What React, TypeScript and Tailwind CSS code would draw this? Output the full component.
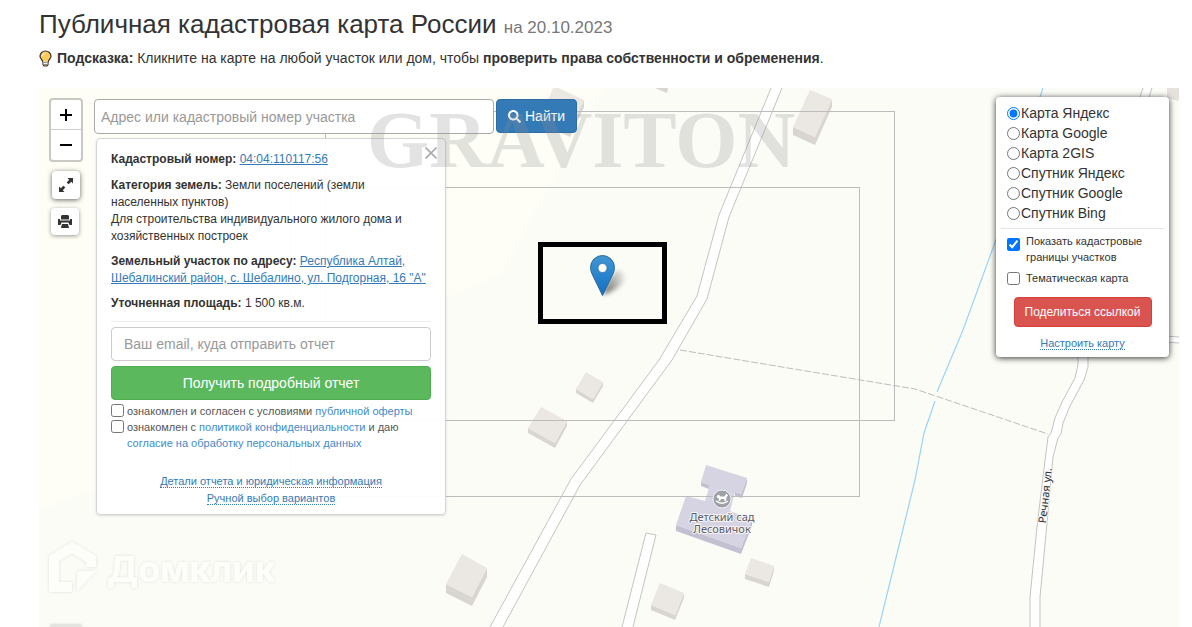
import { FaSearch } from "react-icons/fa";

const layers = [
  "Карта Яндекс",
  "Карта Google",
  "Карта 2GIS",
  "Спутник Яндекс",
  "Спутник Google",
  "Спутник Bing",
];

type Point = [number, number];

// roof corners: top, right, bottom, left
const buildings: { roof: Point[]; depth: number }[] = [
  { roof: [[586, 372], [603, 382], [593, 399], [576, 389]], depth: 4 },
  { roof: [[541, 407], [567, 421], [555, 443], [528, 428]], depth: 5 },
  { roof: [[751, 558], [774, 566], [769, 582], [745, 574]], depth: 5 },
  { roof: [[660, 583], [684, 593], [675, 615], [651, 605]], depth: 5 },
  { roof: [[462, 554], [487, 568], [472, 597], [446, 584]], depth: 9 },
  { roof: [[810, 90], [832, 99], [815, 137], [793, 127]], depth: 8 },
  { roof: [[554, 86], [584, 100], [570, 130], [541, 116]], depth: 7 },
];

const Building = ({ roof, depth }: { roof: Point[]; depth: number }) => {
  const [, right, bottom, left] = roof;
  const down = ([x, y]: Point): Point => [x, y + depth];
  const walls = [left, bottom, right, down(right), down(bottom), down(left)];

  return (
    <g>
      <polygon points={walls.join(" ")} fill="#d9d5d0" />
      <polygon points={roof.join(" ")} fill="#ebe7e2" />
    </g>
  );
};

const MapCanvas = () => {
  return (
    <svg
      className="absolute inset-0 size-full"
      viewBox="39 88 1140 539"
      preserveAspectRatio="xMidYMin slice"
      aria-hidden="true"
    >
      <defs>
        <linearGradient id="pin" x1="0" y1="0" x2="0" y2="1">
          <stop offset="0" stopColor="#4196d3" />
          <stop offset="1" stopColor="#126fc6" />
        </linearGradient>
        <linearGradient id="pin-shadow" x1="0" y1="0.7" x2="1" y2="0.3">
          <stop offset="0" stopColor="#000" stopOpacity="0.55" />
          <stop offset="1" stopColor="#000" stopOpacity="0.05" />
        </linearGradient>
        <filter id="soft" x="-50%" y="-50%" width="200%" height="200%">
          <feGaussianBlur stdDeviation="2" />
        </filter>
        <filter id="glow" x="-20%" y="-20%" width="140%" height="140%">
          <feDropShadow dx="0" dy="0" stdDeviation="1.500" floodColor="#000" floodOpacity="0.12" />
        </filter>
      </defs>

      <rect x="39" y="88" width="1140" height="539" fill="#fbfcf6" />
      <polygon points="39,88 605,88 500,275 446,298 96,490 39,510" fill="#fefef6" />

      {/* river */}
      <path
        d="M1043 88L1040 97L997 237L963 330L937 392M935 401L924 433L915 480L904 525L879 627"
        fill="none"
        stroke="#9bd4f3"
        strokeWidth="1.2"
      />

      {/* roads */}
      <g fill="#fff">
        <path d="M771 88L719 215L697 296L659 360L571 479L490 627H503L580 485L672 360L707 299L729 217L782 88Z" />
        <path d="M646 533L656 535L633 627H622Z" />
        <path d="M1078 350V365L1075 378L1062 402L1055 418L1051 433L1048 437L1043 477L1037 527L1030 597V627H1040V597L1047 523L1053 457L1058 438L1061 434L1063 423L1070 406L1084 380L1088 367V350Z" />
        <path d="M1143 88L1140 97H1149L1152 88ZM1165 336L1179 337V343L1165 342Z" />
      </g>
      <g fill="none" stroke="#c4c4c2" strokeWidth="1">
        <path d="M771 88L719 215L697 296L659 360L571 479L490 627M503 627L580 485L672 360L707 299L729 217L782 88" />
        <path d="M622 627L646 533L656 535L633 627" />
        <path d="M1078 350V365L1075 378L1062 402L1055 418L1051 433L1048 437L1043 477L1037 527L1030 597V627M1040 627V597L1047 523L1053 457L1058 438L1061 434L1063 423L1070 406L1084 380L1088 367V350" />
        <path d="M1143 88L1140 97M1149 97L1152 88M1165 336L1179 337M1165 342L1179 343" />
      </g>
      <path
        d="M680 350L782 367L915 389L1048 434"
        fill="none"
        stroke="#bdbdbd"
        strokeWidth="1"
        strokeDasharray="7 2"
      />

      {buildings.map((building, index) => (
        <Building key={index} {...building} />
      ))}
      <polygon points="655,88 668,88 667,93" fill="#d9d5d0" />
      <polygon points="1167,88 1179,88 1179,101 1167,98" fill="#e5e1dd" />

      {/* kindergarten */}
      <g fill="#c3c0d1">
        <polygon points="676,525 741,548 752,519 752,526 741,554 676,531" />
        <polygon points="701,482 710,485 709,489 701,486" />
        <polygon points="747,478 747,483 742,498 735,496 735,492 741,494" />
      </g>
      <polygon
        points="706,465 747,478 741,494 735,492 730,511 752,519 741,548 676,525 686,496 705,501 710,485 701,482"
        fill="#d6d3e2"
      />

      {/* parcel borders */}
      <g fill="none" stroke="#bcbcbc">
        <rect x="325.5" y="111.5" width="569" height="309" />
        <rect x="290.5" y="187.5" width="569" height="309" />
      </g>

      <circle cx="722" cy="499" r="9" fill="#9ea2a6" stroke="#f2f1f5" strokeWidth="1" />
      <path
        d="M716.500 496.500L718.500 494.500L720.500 496.500H724.500L726.500 493.500L728 495.500L726.500 497L726 501H724.500L724 499H721L720 501H718.500L719 498.500L717.500 498Z"
        fill="#fff"
      />
      <path d="M716 501q6 4.500 12 0" fill="none" stroke="#fff" strokeWidth="1.400" />

      <g
        className="font-['Noto_Sans',sans-serif]"
        fontSize="11"
        stroke="#f7f6fa"
        strokeWidth="2"
        strokeLinejoin="round"
        paintOrder="stroke"
        textAnchor="middle"
      >
        <text x="722" y="521" fill="#5b5b63">
          Детский сад
        </text>
        <text x="722" y="533" fill="#5b5b63">
          Лесовичок
        </text>
        <text transform="translate(1049 496) rotate(-84)" fill="#333">
          Речная ул.
        </text>
      </g>

      {/* marker */}
      <path d="M603 295Q608 276 618 270Q629 272 623 283Q616 291 603 295Z" fill="url(#pin-shadow)" filter="url(#soft)" />
      <path
        d="M602.500 295.500L593 276Q590.500 271.500 590.500 267.500A12 12 0 0 1 614.500 267.500Q614.500 271.500 612 276Z"
        fill="url(#pin)"
        stroke="#2e6c97"
        strokeWidth="1"
      />
      <circle cx="602.500" cy="268" r="4.500" fill="#fff" stroke="#2e6c97" strokeWidth="0.700" />
      <rect x="540.500" y="244.500" width="124" height="77" fill="none" stroke="#000" strokeWidth="5" />

      {/* provider logo */}
      <g fill="#fdfdfa" filter="url(#glow)">
        <path d="M72 542L96 556V567H86V562L72 553L59 561V582H72V592H52Q49 592 49 589V558Q49 556 51 555Z" />
        <path d="M77 591V575Q77 571 81 571H96Z" />
        <text x="107" y="582" fontSize="36" className="font-['Inter',sans-serif] font-bold">
          Домклик
        </text>
      </g>
    </svg>
  );
};

const Bulb = () => (
  <svg className="h-[17px] w-[13px] shrink-0" viewBox="0 0 13 17" aria-hidden="true">
    <path
      d="M6.500 1C3.500 1 1 3.200 1 6.200C1 8.500 3.500 10 4 12.500V14.500L5 16H8L9 14.500V12.500C9.500 10 12 8.500 12 6.200C12 3.200 9.500 1 6.500 1Z"
      fill="#fbc95c"
      stroke="#333"
      strokeWidth="1.200"
    />
    <path d="M4.500 11.500H8.500V14.500H4.500Z" fill="#f4f4f0" />
    <path d="M4.500 12.500H8.500M4.500 14.500H8.500" stroke="#777" strokeWidth="0.800" />
    <path d="M3.500 6Q3.700 3.500 6 3" fill="none" stroke="#ffe9b0" strokeWidth="1.200" />
  </svg>
);

const MapButtons = () => {
  return (
    <div className="flex flex-col items-center self-stretch">
      <div className="flex flex-col rounded border-2 border-[#c8c8c4] bg-white text-black">
        <button
          type="button"
          aria-label="Приблизить"
          className="flex size-[30px] items-center justify-center border-b border-[#ccc]"
        >
          <svg className="size-3" viewBox="0 0 12 12">
            <path d="M0 6H12M6 0V12" stroke="currentColor" strokeWidth="2" />
          </svg>
        </button>
        <button type="button" aria-label="Отдалить" className="flex size-[30px] items-center justify-center">
          <svg className="size-3" viewBox="0 0 12 12">
            <path d="M0 6H12" stroke="currentColor" strokeWidth="2" />
          </svg>
        </button>
      </div>

      <button
        type="button"
        aria-label="На весь экран"
        className="mt-[9px] flex size-7 items-center justify-center rounded bg-white shadow-[0_1px_5px_rgba(0,0,0,0.6)]"
      >
        <svg className="size-3.5" viewBox="0 0 14 14" fill="#333">
          <path d="M8.500 0H14V5.500L12.300 3.800L9.600 6.300L7.700 4.400L10.200 1.700Z" />
          <path d="M5.500 14H0V8.500L1.700 10.200L4.400 7.700L6.300 9.600L3.800 12.300Z" />
        </svg>
      </button>
      <button
        type="button"
        aria-label="Печать"
        className="mr-0.5 mt-[9px] flex h-[27px] w-7 items-center justify-center rounded bg-white shadow-[0_1px_4px_rgba(0,0,0,0.4)]"
      >
        <svg className="h-[13px] w-3.5" viewBox="0 0 14 13" fill="#333">
          <path d="M4 0H10L11 1V4.500H3V1Z" />
          <path d="M0 4H2V5.500H12V4H14V10H11.500L10.500 7.500H3.500L2.500 10H0Z" />
          <path d="M4 9H10L11 13H3Z" />
        </svg>
      </button>

      <button
        type="button"
        aria-label="Слои"
        className="mt-auto h-0.5 w-8 rounded-t bg-[#e4e4e0] shadow-[0_0_3px_rgba(0,0,0,0.3)]"
      />
    </div>
  );
};

const ParcelInfo = () => {
  return (
    <section className="ml-0.5 mt-1 w-[350px] rounded border border-[#d5d5d3] bg-white/95 px-3.5 pb-[7px] text-xs leading-[17px] text-[#333] shadow-sm">
      <div className="flex items-start justify-between">
        <p className="pt-3">
          <b>Кадастровый номер:</b>{" "}
          <a href="#parcel" className="text-[#337ab7] underline">
            04:04:110117:56
          </a>
        </p>
        <button type="button" aria-label="Закрыть" className="-mr-2 mt-1.5 p-0.5 text-[#aaa]">
          <svg className="size-3" viewBox="0 0 12 12">
            <path d="M0.500 0.500L11.500 11.500M11.500 0.500L0.500 11.500" stroke="currentColor" strokeWidth="1.600" />
          </svg>
        </button>
      </div>
      <p className="mt-[9px]">
        <b>Категория земель:</b> Земли поселений (земли
        <br />
        населенных пунктов)
        <br />
        Для строительства индивидуального жилого дома и<br />
        хозяйственных построек
      </p>
      <p className="mt-2">
        <b>Земельный участок по адресу:</b>{" "}
        <a href="#address" className="text-[#337ab7] underline">
          Республика Алтай,
          <br />
          Шебалинский район, с. Шебалино, ул. Подгорная, 16 "А"
        </a>
      </p>
      <p className="mt-2">
        <b>Уточненная площадь:</b> 1 500 кв.м.
      </p>

      <form className="mt-[9px] border-t border-[#eee] pt-[5px]">
        <input
          type="email"
          aria-label="Email"
          placeholder="Ваш email, куда отправить отчет"
          className="h-[34px] w-full rounded border border-[#ccc] bg-white px-3 text-sm placeholder:text-[#999]"
        />
        <button
          type="button"
          className="mt-[5px] h-[34px] w-full rounded border border-[#4cae4c] bg-[#5cb85c] text-sm font-medium text-white"
        >
          Получить подробный отчет
        </button>
        <div className="mt-[3px] text-[11px] leading-4 text-[#555]">
          <div className="flex items-start gap-[3px]">
            <input type="checkbox" id="offer" className="mt-px size-[13px]" />
            <label htmlFor="offer">
              ознакомлен и согласен с условиями{" "}
              <a href="#offer-text" className="text-[#428bca]">
                публичной оферты
              </a>
            </label>
          </div>
          <div className="flex items-start gap-[3px]">
            <input type="checkbox" id="privacy" className="mt-px size-[13px]" />
            <label htmlFor="privacy">
              ознакомлен с{" "}
              <a href="#privacy-text" className="text-[#428bca]">
                политикой конфиденциальности
              </a>{" "}
              и даю
              <br />
              <a href="#consent" className="text-[#428bca]">
                согласие на обработку персональных данных
              </a>
            </label>
          </div>
        </div>
      </form>

      <div className="mt-[22px] flex flex-col items-center text-[11px] text-[#337ab7]">
        <a href="#details" className="h-[17px]">
          <span className="border-b border-dotted border-[#337ab7]">Детали отчета и юридическая информация</span>
        </a>
        <a href="#manual" className="h-[17px]">
          <span className="border-b border-dotted border-[#337ab7]">Ручной выбор вариантов</span>
        </a>
      </div>
    </section>
  );
};

const LayersPanel = () => {
  return (
    <aside className="-mt-px ml-auto w-[173px] shrink-0 rounded bg-white px-[11px] pb-[5px] pt-1.5 text-[#333] shadow-[0_1px_6px_rgba(0,0,0,0.8)]">
      <fieldset>
        {layers.map((layer, index) => (
          <label key={layer} className="flex h-5 items-center gap-px text-sm">
            <input type="radio" name="layer" defaultChecked={index === 0} className="size-[13px]" />
            {layer}
          </label>
        ))}
      </fieldset>

      <div className="-mx-1.5 mt-[5px] border-t border-[#e5e5e5]" />

      <label className="mt-1 flex items-start gap-1.5 text-[11px] leading-4">
        <input type="checkbox" defaultChecked className="mt-[5px] size-[13px] shrink-0" />
        <span>
          Показать кадастровые
          <br />
          границы участков
        </span>
      </label>
      <label className="mt-[5px] flex items-center gap-1.5 text-[11px] leading-4">
        <input type="checkbox" className="size-[13px]" />
        Тематическая карта
      </label>

      <div className="mt-[11px] flex flex-col items-center">
        <button
          type="button"
          className="h-[30px] rounded-sm border border-[#d43f3a] bg-[#d9534f] px-2.5 text-xs font-medium text-white"
        >
          Поделиться ссылкой
        </button>
        <a href="#settings" className="mt-2 text-[11px] leading-[17px] text-[#337ab7]">
          <span className="border-b border-dotted border-[#337ab7]">Настроить карту</span>
        </a>
      </div>
    </aside>
  );
};

const App = () => {
  return (
    <div className="flex h-screen flex-col overflow-hidden bg-white pl-[39px] pr-[13px] font-['Liberation_Sans',Arial,sans-serif] text-sm text-[#333]">
      <header className="h-[88px] shrink-0 pt-2">
        <h1 className="text-[26px] leading-8">
          Публичная кадастровая карта России <small className="text-[17px] text-[#777]">на 20.10.2023</small>
        </h1>
        <p className="mt-1 flex items-center gap-[5px] leading-5">
          <Bulb />
          <span>
            <b>Подсказка:</b> Кликните на карте на любой участок или дом, чтобы{" "}
            <b>проверить права собственности и обременения</b>.
          </span>
        </p>
      </header>

      <main className="relative min-h-0 flex-1 overflow-hidden">
        <MapCanvas />

        <div className="relative flex h-full items-start px-2.5 pt-2.5">
          <MapButtons />

          <div className="ml-[11px] mt-px">
            <form className="flex gap-0.5">
              <input
                type="text"
                aria-label="Адрес или кадастровый номер участка"
                placeholder="Адрес или кадастровый номер участка"
                className="h-[35px] w-[400px] rounded border border-[#aaa] bg-white px-1.5 text-sm placeholder:text-[#999]"
              />
              <button
                type="button"
                className="flex h-[34px] items-center gap-1 rounded border border-[#2e6da4] bg-[#337ab7] px-[11px] text-sm text-white"
              >
                <FaSearch className="size-[13px]" />
                Найти
              </button>
            </form>
            <ParcelInfo />
          </div>

          <LayersPanel />
        </div>

        <span className="pointer-events-none absolute left-[328px] top-2 font-['Liberation_Serif',serif] text-[80px] font-bold leading-[88px] text-[#909090]/25">
          GRAVITON
        </span>
      </main>
    </div>
  );
};

export default App;
